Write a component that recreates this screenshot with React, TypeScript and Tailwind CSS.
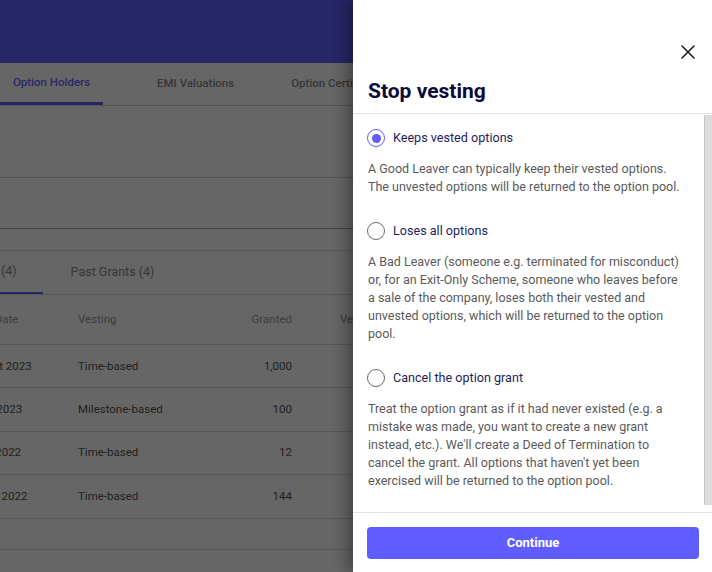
import React from 'react';
import { X } from 'lucide-react';

const grants = [
  { date: '30 Sept 2023', vesting: 'Time-based', granted: '1,000' },
  { date: '1 Mar 2023', vesting: 'Milestone-based', granted: '100' },
  { date: '1 Jun 2022', vesting: 'Time-based', granted: '12' },
  { date: '12 Jan 2022', vesting: 'Time-based', granted: '144' },
];

const options = [
  {
    label: 'Keeps vested options',
    text: 'A Good Leaver can typically keep their vested options. The unvested options will be returned to the option pool.',
  },
  {
    label: 'Loses all options',
    text: 'A Bad Leaver (someone e.g. terminated for misconduct) or, for an Exit-Only Scheme, someone who leaves before a sale of the company, loses both their vested and unvested options, which will be returned to the option pool.',
  },
  {
    label: 'Cancel the option grant',
    text: "Treat the option grant as if it had never existed (e.g. a mistake was made, you want to create a new grant instead, etc.). We'll create a Deed of Termination to cancel the grant. All options that haven't yet been exercised will be returned to the option pool.",
  },
];

const Radio: React.FC<{ checked: boolean }> = ({ checked }) => (
  <span
    className={`w-[18px] h-[18px] rounded-full flex items-center justify-center shrink-0 border-[1.5px] ${
      checked ? 'border-[#5f5dff]' : 'border-[#6b6b6b]'
    }`}
  >
    {checked && <span className="w-[9px] h-[9px] rounded-full bg-[#5f5dff]" />}
  </span>
);

const BackgroundPage: React.FC = () => (
  <div className="w-full h-full flex flex-col bg-white text-[12.5px]">
    <div className="h-[63px] bg-[#6160ff] shrink-0" />

    {/* Main tabs */}
    <div className="h-[43px] flex border-b border-[#cfcfcf] shrink-0">
      <div className="w-[103px] flex items-center justify-center border-b-[3px] border-[#5f5dff] text-[#6a67ff] font-medium text-[11.5px]">
        Option Holders
      </div>
      <div className="ml-[54px] flex items-center text-[#8a8a8a] font-medium text-[11.5px]">EMI Valuations</div>
      <div className="ml-[57px] flex items-center text-[#8a8a8a] font-medium text-[11.5px] whitespace-nowrap">
        Option Certificates
      </div>
    </div>

    <div className="h-[72px] border-b border-[#d6d6d6] shrink-0" />
    <div className="h-[51px] border-b border-[#a8a8a8] shrink-0" />
    <div className="h-[22px] border-b border-[#dadada] shrink-0" />

    {/* Grant tabs */}
    <div className="h-[44px] flex border-b border-[#dadada] shrink-0 ml-[-109px]">
      <div className="px-[26px] flex items-center border-b-2 border-[#5f5dff] text-[#8a8a8a] whitespace-nowrap">
        Current Grants (4)
      </div>
      <div className="px-[28px] flex items-center text-[#8a8a8a] whitespace-nowrap">Past Grants (4)</div>
    </div>

    {/* Table */}
    <div className="ml-[-36px] text-[11.5px]">
      <div className="h-[50px] flex items-center border-b border-[#dadada] text-[#9a9a9a]">
        <div className="w-[114px]">Grant Date</div>
        <div className="w-[114px]">Vesting</div>
        <div className="w-[100px] text-right">Granted</div>
        <div className="ml-[48px]">Vested</div>
      </div>
      {grants.map((g) => (
        <div key={g.date} className="h-[43.4px] flex items-center border-b border-[#dadada] text-[#555]">
          <div className="w-[114px] whitespace-nowrap">{g.date}</div>
          <div className="w-[114px]">{g.vesting}</div>
          <div className="w-[100px] text-right">{g.granted}</div>
        </div>
      ))}
      <div className="h-[31px] border-b border-[#dadada]" />
    </div>
  </div>
);

export default function App() {
  return (
    <div className="relative w-[712px] h-[572px] overflow-hidden font-['Roboto',sans-serif]">
      <BackgroundPage />

      {/* Backdrop */}
      <div className="absolute inset-0 bg-black/60" />

      {/* Drawer */}
      <div className="absolute top-0 right-0 h-full w-[359px] bg-white flex flex-col shadow-[-6px_0_14px_rgba(0,0,0,0.35)]">
        <div className="border-b border-[#e2e2e2] pb-2">
          <div className="flex justify-end pt-10 pr-3">
            <X size={24} strokeWidth={1.6} className="text-[#222]" />
          </div>
          <h2 className="mt-[13px] pl-[15px] text-[21px] leading-7 font-bold text-[#0b0b3b]">Stop vesting</h2>
        </div>

        <div className="flex-1 flex min-h-0">
          <div className="flex-1 pl-[15px] pr-5 pt-[14px] flex flex-col gap-[25px]">
            {options.map((o, i) => (
              <div key={o.label}>
                <div className="h-5 flex items-center gap-2 -ml-px">
                  <Radio checked={i === 0} />
                  <span className="text-[12.6px] text-[#1e1e5c]">{o.label}</span>
                </div>
                <p className="mt-3 text-[12.5px] leading-[18px] text-[#5a5a5a]">{o.text}</p>
              </div>
            ))}
          </div>
          <div className="w-2 mt-px mb-[7px] bg-[#dcdcdc] border-l border-[#c4c4c4]" />
        </div>

        <div className="border-t border-[#e2e2e2] pt-[14px] pb-[13px] pl-[14px] pr-[13px]">
          <button className="w-full h-8 rounded bg-[#5f5dff] text-white text-[13px] font-bold">Continue</button>
        </div>
      </div>
    </div>
  );
}
